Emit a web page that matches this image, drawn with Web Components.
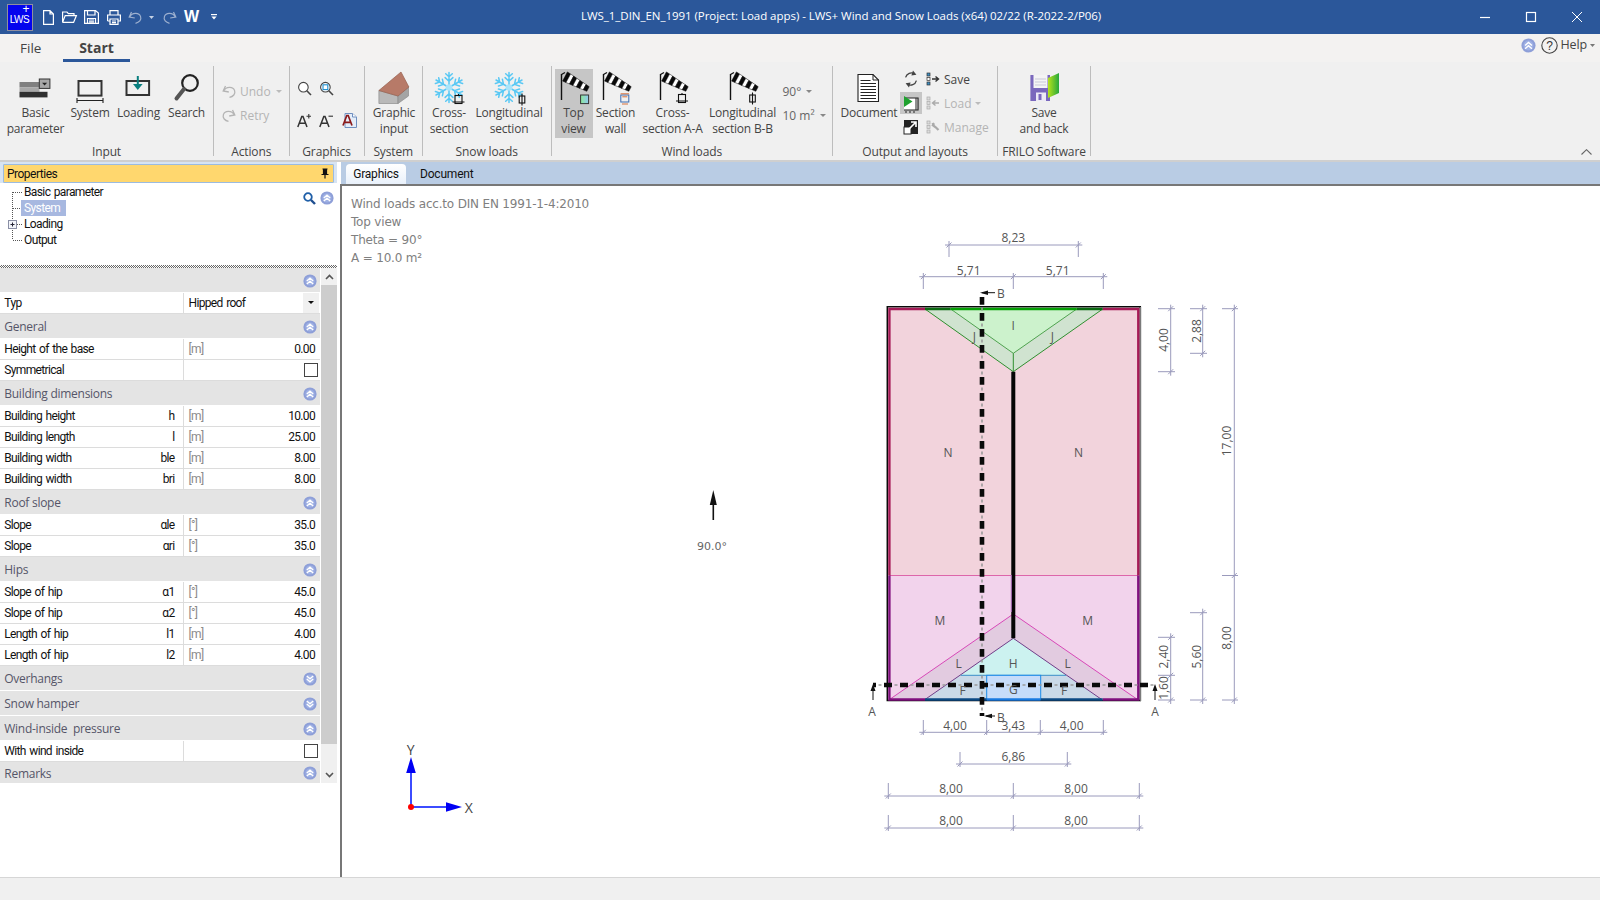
<!DOCTYPE html>
<html><head><meta charset="utf-8"><title>LWS+</title>
<style>
html,body{margin:0;padding:0;width:1600px;height:900px;overflow:hidden;background:#f0f0f0}
body{font-family:"Open Sans","Liberation Sans",sans-serif;font-size:12px;color:#333}
</style></head><body>
<app-shell>
  <app-titlebar slot="title">LWS_1_DIN_EN_1991 (Project: Load apps) - LWS+ Wind and Snow Loads (x64) 02/22 (R-2022-2/P06)</app-titlebar>
  <ribbon-tabs slot="tabs"></ribbon-tabs>
  <ribbon-bar slot="ribbon">
    <rb-group w="214" label="Input" pad="4">
      <rb-btn w="63"><ui-icon slot="icon" name="basic" w="63"></ui-icon>Basic<br>parameter</rb-btn>
      <rb-btn w="46"><ui-icon slot="icon" name="system" w="46"></ui-icon>System</rb-btn>
      <rb-btn w="51"><ui-icon slot="icon" name="loading" w="51"></ui-icon>Loading</rb-btn>
      <rb-btn w="45"><ui-icon slot="icon" name="search" w="45"></ui-icon>Search</rb-btn>
    </rb-group>
    <rb-group w="75.5" label="Actions" pad="8">
      <rb-col top="13" gap="0">
        <rb-small off caret><ui-icon slot="icon" name="undo" box="14" color="#b4b4b4"></ui-icon>Undo</rb-small>
        <rb-small off><ui-icon slot="icon" name="redo" box="14" color="#b4b4b4"></ui-icon>Retry</rb-small>
      </rb-col>
    </rb-group>
    <rb-group w="75" label="Graphics" pad="7"><rb-iconset>
      <ui-icon name="zoom" box="15"></ui-icon><ui-icon name="zoomfit" box="15"></ui-icon><span></span>
      <ui-icon name="aplus" box="15"></ui-icon><ui-icon name="aminus" box="15"></ui-icon><ui-icon name="adoc" box="15"></ui-icon>
    </rb-iconset></rb-group>
    <rb-group w="58.5" label="System" pad="2">
      <rb-btn w="55"><ui-icon slot="icon" name="house" w="55"></ui-icon>Graphic<br>input</rb-btn>
    </rb-group>
    <rb-group w="128.5" label="Snow loads" pad="6">
      <rb-btn w="40"><ui-icon slot="icon" name="snowcross" w="40"></ui-icon>Cross-<br>section</rb-btn>
      <rb-btn w="80"><ui-icon slot="icon" name="snowlong" w="80"></ui-icon>Longitudinal<br>section</rb-btn>
    </rb-group>
    <rb-group w="281.5" label="Wind loads" pad="3">
      <rb-btn w="38" active><ui-icon slot="icon" name="socktop" w="38"></ui-icon>Top<br>view</rb-btn>
      <rb-btn w="46"><ui-icon slot="icon" name="sockwall" w="46"></ui-icon>Section<br>wall</rb-btn>
      <rb-btn w="68"><ui-icon slot="icon" name="sockcross" w="68"></ui-icon>Cross-<br>section A-A</rb-btn>
      <rb-btn w="72"><ui-icon slot="icon" name="socklong" w="72"></ui-icon>Longitudinal<br>section B-B</rb-btn>
      <rb-col top="13" gap="0" left="0">
        <rb-small caret style="--c:#666">90°</rb-small>
        <rb-small caret style="--c:#666">10 m²</rb-small>
      </rb-col>
    </rb-group>
    <rb-group w="165" label="Output and layouts" pad="5">
      <rb-btn w="62"><ui-icon slot="icon" name="document" w="62"></ui-icon>Document</rb-btn>
      <rb-col top="1" gap="0" left="0">
        <rb-small wide><ui-icon slot="icon" name="refresh" box="22"></ui-icon><ui-icon slot="icon2" name="listin" box="14"></ui-icon>Save</rb-small>
        <rb-small wide off caret><ui-icon slot="icon" name="play" box="22" on></ui-icon><ui-icon slot="icon2" name="listout" box="14"></ui-icon>Load</rb-small>
        <rb-small wide off><ui-icon slot="icon" name="expand" box="22"></ui-icon><ui-icon slot="icon2" name="listtool" box="14"></ui-icon>Manage</rb-small>
      </rb-col>
    </rb-group>
    <rb-group w="93" label="FRILO Software" pad="12">
      <rb-btn w="68"><ui-icon slot="icon" name="saveback" w="68"></ui-icon>Save<br>and back</rb-btn>
    </rb-group>
  </ribbon-bar>
  <prop-panel slot="left">
    <tree-item first>Basic parameter</tree-item>
    <tree-item selected>System</tree-item>
    <tree-item plus>Loading</tree-item>
    <tree-item last>Output</tree-item>
    <prop-head slot="grid" blank></prop-head>
    <prop-row slot="grid" combo="Hipped roof">Typ</prop-row>
    <prop-head slot="grid">General</prop-head>
    <prop-row slot="grid" unit="[m]" value="0.00">Height of the base</prop-row>
    <prop-row slot="grid" check>Symmetrical</prop-row>
    <prop-head slot="grid">Building dimensions</prop-head>
    <prop-row slot="grid" sym="h" unit="[m]" value="10.00">Building height</prop-row>
    <prop-row slot="grid" sym="l" unit="[m]" value="25.00">Building length</prop-row>
    <prop-row slot="grid" sym="ble" unit="[m]" value="8.00">Building width</prop-row>
    <prop-row slot="grid" sym="bri" unit="[m]" value="8.00">Building width</prop-row>
    <prop-head slot="grid">Roof slope</prop-head>
    <prop-row slot="grid" sym="αle" unit="[°]" value="35.0">Slope</prop-row>
    <prop-row slot="grid" sym="αri" unit="[°]" value="35.0">Slope</prop-row>
    <prop-head slot="grid">Hips</prop-head>
    <prop-row slot="grid" sym="α1" unit="[°]" value="45.0">Slope of hip</prop-row>
    <prop-row slot="grid" sym="α2" unit="[°]" value="45.0">Slope of hip</prop-row>
    <prop-row slot="grid" sym="l1" unit="[m]" value="4.00">Length of hip</prop-row>
    <prop-row slot="grid" sym="l2" unit="[m]" value="4.00">Length of hip</prop-row>
    <prop-head slot="grid" down>Overhangs</prop-head>
    <prop-head slot="grid" down>Snow hamper</prop-head>
    <prop-head slot="grid">Wind-inside&nbsp; pressure</prop-head>
    <prop-row slot="grid" check>With wind inside</prop-row>
    <prop-head slot="grid" last>Remarks</prop-head>
  </prop-panel>
  <doc-area slot="right"></doc-area>
</app-shell>
<script>
const sock=(sub)=>{
  const s=[-9,76.5],e=[14,89],n=[0.47,-0.88];
  let o=`<path d="M-12.5 74V100" stroke="#111" stroke-width="1.4"/>`;
  o+=`<path d="M-12.5 74.5L-9 72.5" stroke="#111" stroke-width="1.2"/>`;
  const seg=7;
  for(let i=0;i<seg;i++){
    const a=i/seg,b=(i+1)/seg;
    const wa=5.2-2.6*a,wb=5.2-2.6*b;
    const pa=[s[0]+(e[0]-s[0])*a,s[1]+(e[1]-s[1])*a],pb=[s[0]+(e[0]-s[0])*b,s[1]+(e[1]-s[1])*b];
    const q=[[pa[0]+n[0]*wa,pa[1]+n[1]*wa],[pb[0]+n[0]*wb,pb[1]+n[1]*wb],[pb[0]-n[0]*wb,pb[1]-n[1]*wb],[pa[0]-n[0]*wa,pa[1]-n[1]*wa]];
    o+=`<polygon points="${q.map(p=>p.map(v=>v.toFixed(1)).join(',')).join(' ')}" fill="${i%2?'#fff':'#0a0a0a'}" stroke="#0a0a0a" stroke-width=".5"/>`;
  }
  return o+sub;
};
const flake=(cx,cy,r)=>{
  let o=`<g stroke="#58c8f4" stroke-width="1.5" fill="none" stroke-linecap="round">`;
  for(let i=0;i<6;i++){
    o+=`<g transform="translate(${cx} ${cy}) rotate(${i*60})"><path d="M0 0V${-r}M0 ${-r*.42}L${-r*.26} ${-r*.66}M0 ${-r*.42}L${r*.26} ${-r*.66}M0 ${-r*.72}L${-r*.22} ${-r*.92}M0 ${-r*.72}L${r*.22} ${-r*.92}"/></g>`;
  }
  return o+`<circle cx="${cx}" cy="${cy}" r="${r*.22}" fill="#a8e4fa" stroke="none"/></g>`;
};
const markC=(x,y)=>`<g stroke="#111" fill="none" stroke-width="1.1"><rect x="${x-3.5}" y="${y-4}" width="7" height="8"/><path d="M${x-6} ${y+2.5}H${x+6}M${x} ${y-5.5}V${y-3.5}"/></g>`;
const markL=(x,y)=>`<g stroke="#111" fill="none" stroke-width="1.1"><rect x="${x-2.8}" y="${y-3.5}" width="5.6" height="7"/><path d="M${x} ${y-6}V${y+6}"/></g>`;
const ICONS={
 basic:`<rect x="-16" y="82" width="20" height="5.4" fill="#808080"/><rect x="-16" y="87.4" width="20" height="4.4" fill="#a8a8a8"/><rect x="-16" y="91.8" width="28" height="5.6" fill="#303030"/><rect x="3.8" y="79" width="10.6" height="9.4" fill="#a8a8a8" stroke="#333"/><path d="M6.6 82.8h5l-2.5 2.6z" fill="#222"/>`,
 system:`<rect x="-11.5" y="81" width="23" height="14.6" fill="none" stroke="#333" stroke-width="2"/><path d="M-13 100.5H13M-13 98V103M13 98V103" stroke="#222" stroke-width="1.1" fill="none"/>`,
 loading:`<rect x="-12" y="81" width="22.6" height="14" fill="none" stroke="#333" stroke-width="2"/><path d="M-.7 76V85" stroke="#0a7f7f" stroke-width="2"/><path d="M-5.5 84H4.1L-.7 90z" fill="#0a7f7f"/>`,
 search:`<circle cx="3.5" cy="83" r="7.8" fill="none" stroke="#222" stroke-width="2.2"/><path d="M-2.5 89L-10 98.5" stroke="#555" stroke-width="4" stroke-linecap="round"/>`,
 undo:`<path d="M3.5 2L1.2 7L6.8 8" fill="none" stroke="currentColor" stroke-width="1.3"/><path d="M1.8 6.8C4 2.5 11 2 12.6 6.6C13.8 10 11 12.6 7.5 13.4" fill="none" stroke="currentColor" stroke-width="1.3"/>`,
 redo:`<path d="M10.5 2L12.8 7L7.2 8" fill="none" stroke="currentColor" stroke-width="1.3"/><path d="M12.2 6.8C10 2.5 3 2 1.4 6.6C.2 10 3 12.6 6.5 13.4" fill="none" stroke="currentColor" stroke-width="1.3"/>`,
 zoom:`<circle cx="6.4" cy="6.2" r="4.8" fill="#fff" stroke="#444" stroke-width="1.1"/><path d="M9.8 9.8L14 14" stroke="#444" stroke-width="1.6"/>`,
 zoomfit:`<circle cx="6.4" cy="6.2" r="4.8" fill="#fff" stroke="#444" stroke-width="1.1"/><rect x="4" y="3.8" width="4.8" height="4.8" fill="none" stroke="#1d8fd0" stroke-width="1.1"/><path d="M9.8 9.8L14 14" stroke="#444" stroke-width="1.6"/>`,
 aplus:`<path d="M.8 14L4.8 3.4H6L10 14M2.4 10.2H8.4" fill="none" stroke="#333" stroke-width="1.5"/><path d="M9.5 3.2H14M11.8 1V5.5" stroke="#333" stroke-width="1.1"/>`,
 aminus:`<path d="M.8 14L4.8 3.4H6L10 14M2.4 10.2H8.4" fill="none" stroke="#333" stroke-width="1.5"/><path d="M9.5 3.2H14" stroke="#333" stroke-width="1.1"/>`,
 adoc:`<path d="M3 .5H10.5L14.5 4V14.5H3z" fill="#e4edf9" stroke="#6f8fc0"/><path d="M10.5 .5V4H14.5" fill="#fff" stroke="#6f8fc0"/><path d="M1 12.5L4.8 2.5H6.2L10 12.5M2.4 9.3H8.6" fill="none" stroke="#8b1a1a" stroke-width="1.7"/>`,
 house:`<polygon points="-15.6,90.5 -15.6,103.5 3.5,103.5 3.5,96" fill="#b9b9b9" stroke="#8d8d8d" stroke-width=".7"/><polygon points="3.5,96 3.5,103.5 14,96 14,87" fill="#a4a4a4" stroke="#8d8d8d" stroke-width=".7"/><polygon points="-15.6,90.5 6.5,72 14.4,87 3.5,96" fill="#b77a68" stroke="#96604f" stroke-width=".7"/>`,
 snowcross:flake(0,87.5,15)+markC(9.5,99.5),
 snowlong:flake(0,87.5,15)+markL(13,99.5),
 socktop:sock(`<defs><linearGradient id="g"><stop offset="0" stop-color="#8de89a"/><stop offset="1" stop-color="#8fc8f0"/></linearGradient></defs><rect x="6.6" y="95" width="8" height="8.6" fill="url(#g)" stroke="#333"/>`),
 sockwall:sock(`<rect x="4.8" y="95" width="8" height="7" fill="none" stroke="#3a6ab0"/><path d="M6.3 96.8h5M4.6 93.8h8.4" stroke="#d8703a" stroke-width="1"/><path d="M6 104h6" stroke="#d8703a"/>`),
 sockcross:sock(markC(9,98.5)),
 socklong:sock(markL(9.5,98.5)),
 document:`<path d="M-11 74.5H4L9.5 80V101.5H-11z" fill="#fff" stroke="#222" stroke-width="1.1"/><path d="M4 74.5V80H9.5" fill="none" stroke="#222" stroke-width="1"/><path d="M-8.5 80.5H1.5M-8.5 83.5H7M-8.5 86.5H7M-8.5 89.5H7M-8.5 92.5H7M-8.5 95.5H7M-8.5 98.5H7" stroke="#222" stroke-width="1"/>`,
 refresh:`<g fill="none" stroke="#444" stroke-width="1.3"><path d="M5.6 9.4A6 6 0 0 1 14.6 5.8"/><path d="M16.4 12.6A6 6 0 0 1 7.4 16.2"/></g><path d="M13 2.5L16.4 6.8L11.4 7.5z" fill="#444"/><path d="M9 19.5L5.6 15.2L10.6 14.5z" fill="#444"/>`,
 play:`<path d="M4 6H18V18H4" fill="#fff" stroke="#222" stroke-width="1.2"/><path d="M4 4L12.5 9.5L4 15z" fill="#1fa12f"/><path d="M5 20h2M9 20h2M13 20h2M16 6v12" stroke="#222"/>`,
 expand:`<rect x="4" y="4" width="14" height="14" fill="#222"/><rect x="4" y="11" width="7" height="7" fill="#fff" stroke="#222"/><path d="M9.5 12.5L15.5 6.5M11 6H16V11" fill="none" stroke="#fff" stroke-width="1.6"/>`,
 listin:`<g fill="#3c8fc4" stroke="#333" stroke-width=".7"><rect x="1" y="1" width="3" height="3"/><rect x="1" y="5.5" width="3" height="3" fill="#fff"/><rect x="1" y="10" width="3" height="3"/></g><path d="M6 7H12M9.5 4.5L12.5 7L9.5 9.5" fill="none" stroke="#333" stroke-width="1.4"/>`,
 listout:`<g fill="#ddd" stroke="#aaa" stroke-width=".7"><rect x="1" y="1" width="3" height="3"/><rect x="1" y="5.5" width="3" height="3"/><rect x="1" y="10" width="3" height="3"/></g><path d="M7 7H13M9.5 4.5L6.5 7L9.5 9.5" fill="none" stroke="#aaa" stroke-width="1.4"/>`,
 listtool:`<g fill="#ddd" stroke="#aaa" stroke-width=".7"><rect x="1" y="1" width="3" height="3"/><rect x="1" y="5.5" width="3" height="3"/><rect x="1" y="10" width="3" height="3"/></g><path d="M6 4.5L10 7.5L12.5 10" fill="none" stroke="#aaa" stroke-width="2.2"/><path d="M5.5 3.5L7.5 2.5L9 4L7.5 6z" fill="#aaa"/>`,
 saveback:`<path d="M-13.6 75H6V101H-13.6z" fill="#7a68bd"/><rect x="-10.5" y="75" width="14" height="13" fill="#f4f4f4"/><path d="M-9 79H2M-9 82H2M-9 85H2" stroke="#c9c9d8"/><rect x="-8" y="92.5" width="10" height="8.5" fill="#ece9f6"/><rect x="-5.5" y="94" width="3" height="6" fill="#7a68bd"/><defs><linearGradient id="d" x1="0" x2="1"><stop offset="0" stop-color="#b6e31c"/><stop offset="1" stop-color="#27a83c"/></linearGradient></defs><polygon points="4,78 15,73 15,93 4,98" fill="url(#d)"/>`,
 chev2:`<circle cx="7" cy="7" r="6.6" fill="#8e9fd8"/><circle cx="7" cy="7" r="4.6" fill="#9fb1e4"/><path d="M3.8 7L7 4.2L10.2 7M3.8 10L7 7.2L10.2 10" fill="none" stroke="#fff" stroke-width="1.4"/>`,
 chev2d:`<circle cx="7" cy="7" r="6.6" fill="#8e9fd8"/><circle cx="7" cy="7" r="4.6" fill="#9fb1e4"/><path d="M3.8 4L7 6.8L10.2 4M3.8 7L7 9.8L10.2 7" fill="none" stroke="#fff" stroke-width="1.4"/>`
};
const VB={undo:14,redo:14,listin:14,listout:14,listtool:14,refresh:22,play:22,expand:22,chev2:14,chev2d:14};
function def(name,css,html,init){
  customElements.define(name,class extends HTMLElement{
    connectedCallback(){
      if(this.shadowRoot)return;
      const r=this.attachShadow({mode:'open'});
      const h=typeof html==='function'?html(this):html;
      r.innerHTML=`<style>${typeof css==='function'?css(this):css}</style>${h}`;
      if(init)init(this,r);
    }
  });
}
def('ui-icon',el=>`:host{display:block;line-height:0;color:#333;${el.hasAttribute('on')?'background:#c6c6c6;':''}}svg{display:block;overflow:visible}`,el=>{
  const n=el.getAttribute('name'),w=el.getAttribute('w'),b=el.getAttribute('box'),c=el.getAttribute('color');
  const body=ICONS[n];
  if(b){const v=VB[n]||15;return `<svg width="${b}" height="${b}" viewBox="0 0 ${v} ${v}" style="color:${c||'#333'}">${body}</svg>`;}
  return `<svg width="${w}" height="35" viewBox="${-w/2} 69 ${w} 35">${body}</svg>`;
});
def('app-shell',`:host{display:grid;width:1600px;height:900px;grid-template-rows:34px 28px 98px 2px 715px 1px 22px;background:#f0f0f0}
 .sep{background:#cfcfcf}.sep2{background:#d6d6d6}
 .main{display:flex;min-height:0}`,
 `<slot name="title"></slot><slot name="tabs"></slot><slot name="ribbon"></slot><div class="sep"></div>
  <div class="main"><slot name="left"></slot><slot name="right"></slot></div><div class="sep2"></div><status-bar></status-bar>`);
def('status-bar',`:host{display:block;background:#f0f0f0}`,``);
def('app-titlebar',`:host{display:flex;align-items:center;background:#2b579a;color:#fff;height:34px;font:11.5px "Open Sans",sans-serif}
 .left{flex:0 0 581px;display:flex;align-items:center;height:34px;position:relative}
 .logo{margin-left:6.5px;width:24px;height:25px;background:#0404ee;border:1px solid #8f8f9f;position:relative;color:#fff;font:10px/1 "Liberation Sans",sans-serif;text-align:center}
 .logo b{position:absolute;left:0;right:0;bottom:5px;font-weight:400;font-size:10px;letter-spacing:-.5px}
 .logo i{position:absolute;right:2px;top:-2px;font-style:normal;font-size:12px}
 svg{display:block;overflow:visible;fill:none;stroke:#fff;stroke-width:1.2}
 .w{font:bold 16px "Liberation Sans",sans-serif;margin-left:7.5px;letter-spacing:-.5px;width:14px}
 .title{flex:1;white-space:nowrap;letter-spacing:-.04px;padding-bottom:4px}
 .win{display:flex;align-items:center;margin-right:18px}`,
 `<div class="left"><div class="logo"><i>+</i><b>LWS</b></div>
 <svg style="margin-left:10px" width="11" height="15" viewBox="0 0 11 15"><path d="M.6.6H7L10.4 4V14.4H.6zM7 .6V4H10.4"/></svg>
 <svg style="margin-left:8px" width="15" height="12" viewBox="0 0 15 12"><path d="M.6 11.4V1H5L6.4 2.6H12V4.6M.6 11.4H11.6L14.4 4.6H3.2L.6 11.4"/></svg>
 <svg style="margin-left:7px" width="15" height="14" viewBox="0 0 15 14"><path d="M.6.6H11.5L14.4 3V13.4H.6zM3.5.6V5H11V.6M3.5 13.4V8.5H11.5V13.4M5 10H10M5 11.8H10"/></svg>
 <svg style="margin-left:8px" width="14" height="15" viewBox="0 0 14 15"><path d="M3 5V.6H11V5M.6 11V5H13.4V11H11M3 11H.6M3 9H11V14.4H3zM5 11H9M5 12.6H9"/></svg>
 <svg style="margin-left:7px;stroke:#9db0cf" width="14" height="14" viewBox="0 0 14 14"><path d="M3.5 2L1.2 7L6.8 8M1.8 6.8C4 2.5 11 2 12.6 6.6C13.8 10 11 12.6 7.5 13.4"/></svg>
 <svg style="margin-left:7px;fill:#c5d2e5;stroke:none" width="5" height="3" viewBox="0 0 5 3"><path d="M0 0H5L2.5 3z"/></svg>
 <svg style="margin-left:9px;stroke:#9db0cf" width="14" height="14" viewBox="0 0 14 14"><path d="M10.5 2L12.8 7L7.2 8M12.2 6.8C10 2.5 3 2 1.4 6.6C.2 10 3 12.6 6.5 13.4"/></svg>
 <span class="w">W</span>
 <svg style="margin-left:13px;stroke:#fff" width="6" height="6" viewBox="0 0 6 6"><path d="M0 .6H6"/><path d="M.4 2.6H5.6L3 5.6z" fill="#fff" stroke="none"/></svg>
 </div><div class="title"><slot></slot></div>
 <div class="win">
 <svg width="10" height="10" viewBox="0 0 10 10" style="margin-right:36px"><path d="M0 5.5H10"/></svg>
 <svg width="10" height="10" viewBox="0 0 10 10" style="margin-right:36px"><rect x=".5" y=".5" width="9" height="9"/></svg>
 <svg width="10" height="10" viewBox="0 0 10 10"><path d="M0 0L10 10M10 0L0 10" stroke-width="1"/></svg>
 </div>`);
def('ribbon-tabs',`:host{display:flex;height:28px;background:#f3f2f1;color:#444;font:13.5px/28px "Open Sans",sans-serif;box-sizing:border-box;position:relative}
 .f{padding-left:20px;width:63px;box-sizing:border-box;line-height:28px}
 .s{width:67px;box-sizing:border-box;text-align:center;font-weight:700;font-size:14px;border-bottom:3px solid #2b579a;height:28px;line-height:28px;color:#444}
 .r{margin-left:auto;display:flex;align-items:center;height:22px;color:#444;font-size:12.5px;padding-right:5px}
 svg{display:block}`,
 `<div class="f">File</div><div class="s">Start</div>
 <div class="r"><ui-icon name="chev2" box="15"></ui-icon>
 <svg style="margin-left:5px" width="17" height="17" viewBox="0 0 17 17"><circle cx="8.5" cy="8.5" r="7.7" fill="none" stroke="#444" stroke-width="1.1"/><text x="8.5" y="12.8" text-anchor="middle" font-family="Liberation Sans" font-size="12" fill="#333">?</text></svg>
 <span style="margin-left:3px;letter-spacing:-.15px">Help</span>
 <svg style="margin-left:3px" width="5" height="3" viewBox="0 0 5 3"><path d="M0 0H5L2.5 3z" fill="#777"/></svg></div>`);
def('ribbon-bar',`:host{display:flex;height:98px;background:#f0f0f0;position:relative;align-items:flex-start}
 svg{position:absolute;right:8px;bottom:5px}`,
 `<slot></slot><svg width="11" height="6" viewBox="0 0 11 6"><path d="M.5 5.5L5.5.7L10.5 5.5" fill="none" stroke="#666" stroke-width="1.1"/></svg>`);
def('rb-group',el=>`:host{display:flex;flex-direction:column;box-sizing:border-box;flex:none;width:${el.getAttribute('w')}px;height:90px;margin-top:4px;border-right:1px solid #bdbdbd}
 .c{height:78px;display:flex;padding-left:${el.getAttribute('pad')||0}px;box-sizing:border-box}
 .l{height:16px;text-align:center;white-space:nowrap;color:#444;font:12px/16px "Open Sans",sans-serif;letter-spacing:-.13px;margin-bottom:-4px}`,
 el=>`<div class="c"><slot></slot></div><div class="l">${el.getAttribute('label')}</div>`);
def('rb-btn',el=>`:host{display:block;flex:none;width:${el.getAttribute('w')}px;padding-top:3px;box-sizing:border-box;height:72px}
 .in{height:69px;${el.hasAttribute('active')?'background:#c6c6c6;':''}}
 .l{text-align:center;font:12px/16px "Open Sans",sans-serif;letter-spacing:-.2px;color:#444;white-space:nowrap;margin-top:1px}`,
 `<div class="in"><slot name="icon"></slot><div class="l"><slot></slot></div></div>`);
def('rb-col',el=>`:host{display:flex;flex-direction:column;padding-top:${el.getAttribute('top')}px;margin-left:${el.getAttribute('left')||0}px}`,`<slot></slot>`);
def('rb-small',el=>`:host{display:flex;align-items:center;height:24px;font:12px "Open Sans",sans-serif;letter-spacing:0;white-space:nowrap;color:${el.hasAttribute('off')?'#b4b4b4':'var(--c,#444)'}}
 .t{margin-left:4px}
 .car{display:inline-block;border:3px solid transparent;border-top:3px solid #888;border-bottom:0;margin-left:${el.hasAttribute('wide')?3:5}px;${el.hasAttribute('off')?'border-top-color:#bbb;':''}}
 ::slotted([slot=icon2]){margin-left:4px}`,
 el=>`<slot name="icon"></slot><slot name="icon2"></slot><span class="t"><slot></slot></span>${el.hasAttribute('caret')?'<span class="car"></span>':''}`);
def('rb-iconset',`:host{display:grid;grid-template-columns:22.5px 22.5px 22px;grid-template-rows:14px 14px;row-gap:18px;padding-top:15px}`,`<slot></slot>`);
def('prop-panel',`:host{display:flex;flex-direction:column;width:341px;height:715px;background:#fff;box-sizing:border-box;flex:none;position:relative}
 .hdwrap{background:#d7e4f3;padding:2px 3px 0;height:21px;box-sizing:border-box;width:337px}
 .hd{height:19px;background:#ffd76e;border:1px solid #9bbbe0;box-sizing:border-box;display:flex;align-items:center;justify-content:space-between;padding:0 4px 0 3px;font:12px "Roboto",sans-serif;letter-spacing:-.5px;color:#111;border-radius:1px}
 .tree{height:82px;padding-top:1px;box-sizing:border-box;position:relative;width:337px}
 .tools{position:absolute;right:3px;top:8px;display:flex;align-items:center;gap:4px}
 .sash{height:3px;width:337px;background:repeating-conic-gradient(#666 0 25%,#fff 0 50%) 0 0/2px 2px}
 .grid{display:flex;width:337px;height:515px}
 .rows{width:320px}
 .sb{width:16px;margin-left:1px;background:#f0f0f0;display:flex;flex-direction:column}
 .sb svg{display:block}
 .thumb{height:459px;background:#cdcdcd;flex:none}
 .sb .b{height:17px;display:flex;align-items:center;justify-content:center;flex:none}
 .sb .fill{flex:1}`,
 `<div class="hdwrap"><div class="hd">Properties<svg width="8" height="11" viewBox="0 0 8 11"><path d="M1.5 1H6.5M2.5 1V6M5.5 1V6M.5 6.5H7.5M4 6.5V10.5" stroke="#111" stroke-width="1.2" fill="none"/><rect x="2.5" y="1" width="2.5" height="5.5" fill="#111"/></svg></div></div>
 <div class="tree"><slot></slot><div class="tools"><svg width="13" height="13" viewBox="0 0 13 13"><circle cx="5" cy="5" r="3.8" fill="#fff" stroke="#1f5fa8" stroke-width="1.8"/><path d="M8 8L12 12" stroke="#1f4f90" stroke-width="2.4"/></svg><ui-icon name="chev2" box="14"></ui-icon></div></div>
 <div class="sash"></div>
 <div class="grid"><div class="rows"><slot name="grid"></slot></div>
 <div class="sb"><div class="b"><svg width="9" height="6" viewBox="0 0 9 6"><path d="M1 5L4.5 1.5L8 5" fill="none" stroke="#555" stroke-width="1.6"/></svg></div><div class="thumb"></div><div class="fill"></div><div class="b"><svg width="9" height="6" viewBox="0 0 9 6"><path d="M1 1L4.5 4.5L8 1" fill="none" stroke="#555" stroke-width="1.6"/></svg></div></div></div>`);
def('tree-item',el=>`:host{display:flex;height:16px;align-items:center;font:12px "Roboto",sans-serif;letter-spacing:-.62px;word-spacing:1px;color:#111;white-space:nowrap}
 svg{flex:none;display:block}
 .t{${el.hasAttribute('selected')?'background:#a7b8e0;color:#fff;padding:0 6px 0 3px;':'padding:0 3px;'}margin-left:-3px;line-height:16px;height:16px}`,
 el=>{
  const first=el.hasAttribute('first'),last=el.hasAttribute('last'),plus=el.hasAttribute('plus');
  return `<svg width="24" height="16" viewBox="0 0 24 16"><path d="M12.5 ${first?8:0}V${last?8:16}" stroke="#555" stroke-dasharray="1 1" fill="none"/><path d="M13 8.5H22" stroke="#555" stroke-dasharray="1 1" fill="none"/>${plus?'<rect x="8.5" y="4.5" width="8" height="8" fill="#f2f4fa" stroke="#8a8fa5"/><path d="M10.5 8.5H14.5M12.5 6.5V10.5" stroke="#223"/>':''}</svg><span class="t"><slot></slot></span>`;
 });
def('prop-head',el=>`:host{display:flex;align-items:center;justify-content:space-between;height:${el.hasAttribute('last')?21:el.hasAttribute('blank')?24.5:25}px;box-sizing:border-box;background:#e4e4e4;${el.hasAttribute('last')?'':'border-bottom:1px solid #fff;'}padding:2px 3px 0 4.3px;font:12px "Open Sans",sans-serif;letter-spacing:-.27px;color:#555568;white-space:nowrap}`,
 el=>`<span><slot></slot></span><ui-icon name="${el.hasAttribute('down')?'chev2d':'chev2'}" box="14"></ui-icon>`);
def('prop-row',el=>`:host{display:grid;grid-template-columns:182.5px 1.5px 1fr;height:21px;box-sizing:border-box;border-bottom:1px solid #dcdcdc;background:#fff;font:12px "Roboto",sans-serif;letter-spacing:-.66px;word-spacing:1.2px;color:#111;white-space:nowrap;line-height:21px}
 .a{display:flex;justify-content:space-between;padding:0 8px 0 4.3px}
 .d{background:#dcdcdc}
 .b{display:flex;justify-content:space-between;padding:0 5px 0 4.5px}
 .u{color:#8a8a8a}
 .ck{width:12px;height:12px;border:1px solid #444;background:#fff;margin:3.5px -2.5px 0 0;flex:none}
 .dd{width:16px;height:20px;background:#f0f0f0;margin-right:-4px;display:flex;align-items:center;justify-content:center}
 .dd i{border:3px solid transparent;border-top:3.5px solid #111;border-bottom:0}`,
 el=>{
  const g=n=>el.getAttribute(n);
  let b='';
  if(g('combo')!==null) b=`<span>${g('combo')}</span><span class="dd"><i></i></span>`;
  else if(el.hasAttribute('check')) b=`<span></span><span class="ck"></span>`;
  else b=`<span class="u">${g('unit')}</span><span>${g('value')}</span>`;
  return `<div class="a"><span><slot></slot></span><span>${g('sym')||''}</span></div><div class="d"></div><div class="b">${b}</div>`;
 });
def('doc-area',`:host{display:flex;flex-direction:column;flex:none;width:1259px;height:715px}
 .tabs{height:22px;background:#b9cce4;display:flex;align-items:flex-end;padding-left:5px;font:12px "Roboto",sans-serif;letter-spacing:-.2px;color:#111;flex:none}
 .t{height:20px;line-height:20px;width:60px;box-sizing:border-box;text-align:center;border-radius:4px 4px 0 0;background:linear-gradient(#fff,#e9f1fb)}
 .t2{height:20px;line-height:20px;margin-left:14px}
 canvas-view{flex:1;min-height:0}`,
 `<div class="tabs"><div class="t">Graphics</div><div class="t2">Document</div></div><canvas-view></canvas-view>`);
const hdim=(y,xs,e1,e2,labs,ty)=>{
  let o=`<path d="M${xs[0]-4} ${y}H${xs[xs.length-1]+4}"/>`;
  xs.forEach(x=>o+=`<path d="M${x} ${e1}V${e2}M${x-2.5} ${y+2.5}L${x+2.5} ${y-2.5}"/>`);
  labs.forEach(([t,x])=>o+=`<text x="${x}" y="${ty+4.5}" stroke="none">${t}</text>`);
  return o;
};
const vdim=(x,ys,x1,x2,labs,tx)=>{
  let o=`<path d="M${x} ${ys[0]-4}V${ys[ys.length-1]+4}"/>`;
  ys.forEach(y=>o+=`<path d="M${x1} ${y}H${x2}M${x-2.5} ${y+2.5}L${x+2.5} ${y-2.5}"/>`);
  labs.forEach(([t,y])=>o+=`<text transform="translate(${tx+4.5} ${y}) rotate(-90)" stroke="none">${t}</text>`);
  return o;
};
const cx=1013.3;
const dims=`<g stroke="#9a9abc" stroke-width="1" fill="none" font-family="Open Sans" font-size="12" text-anchor="middle">
 <g fill="#555">
 ${hdim(245,[949,1078.3],241,257,[['8,23',cx]],237)}
 ${hdim(276.7,[923.3,cx,1103.3],273,289,[['5,71',968.7],['5,71',1057.7]],270)}
 ${vdim(1170.7,[308.7,371.7],1158,1175,[['4,00',340]],1163.5)}
 ${vdim(1202.7,[308.7,353.3],1190,1207,[['2,88',331]],1196.2)}
 ${vdim(1234.3,[308.7,575.5,700],1222,1238,[['17,00',441],['8,00',638]],1226.6)}
 ${vdim(1202.7,[612.7,700],1190,1207,[['5,60',656.7]],1196.2)}
 ${vdim(1170.7,[637.3,675.3,700],1158,1175,[['2,40',656.7],['1,60',688]],1163.5)}
 ${hdim(732.3,[923.3,986.7,1040.3,1103.3],720,735,[['4,00',955],['3,43',cx],['4,00',1071.7]],725.7)}
 ${hdim(764,[960,1067.3],752,767,[['6,86',cx]],756.7)}
 ${hdim(796,[888.3,cx,1139.3],783,799,[['8,00',951],['8,00',1076]],788.7)}
 ${hdim(828,[888.3,cx,1139.3],815,831,[['8,00',951],['8,00',1076]],820.7)}
 </g></g>`;
const zl=(t,x,y)=>`<text x="${x}" y="${y+4.5}" text-anchor="middle">${t}</text>`;
const drawing=`<svg width="1258" height="691" viewBox="342 186 1258 691" style="display:block">
 <rect x="889" y="309" width="249.5" height="266.5" fill="#f2d3dc"/>
 <rect x="889" y="575.5" width="249.5" height="124" fill="#f2d3ec"/>
 <path d="M889 575.5H1138.5" stroke="#dd66aa" fill="none"/>
 <polygon points="889.5,699.5 ${cx},614 1137.5,699.5" fill="#e2cbe0"/>
 <path d="M889.5 699.5L${cx} 614L1137.5 699.5" fill="none" stroke="#d848b8" stroke-width="1"/>
 <polygon points="925,699.5 960.7,675.3 1066,675.3 1101.7,699.5" fill="#c9d9e8"/>
 <polygon points="${cx},638.3 960.7,675.3 1066,675.3" fill="#ccf2f0"/>
 <path d="M925 699.5L${cx} 638.3L1101.7 699.5" fill="none" stroke="#70408a" stroke-width="1"/>
 <path d="M960.7 675.3H1066" stroke="#3a90c8" fill="none"/>
 <rect x="986.7" y="675.3" width="54" height="24.2" fill="#c6dcfa" stroke="#1a8ae8" stroke-width="1"/>
 <polygon points="925,309 1102.7,309 ${cx},371.7" fill="#d0e3d0"/>
 <polygon points="950.7,309 1076.7,309 ${cx},353.3" fill="#ccf2cc" stroke="#2f8f2f" stroke-width=".8"/>
 <path d="M925 309L${cx} 371.7L1102.7 309M${cx} 353.3V371.7" fill="none" stroke="#2f8f2f" stroke-width="1"/>
 <path d="M887.3 700.5V306.7H1140.3V700.5Z" fill="none" stroke="#0a0a0a" stroke-width="1.5"/>
 <path d="M1140.9 307V701" stroke="#c4c4c4" stroke-width="1" fill="none"/>
 <path d="M889.4 575.5V309H925M1102.7 309H1138.3V575.5" fill="none" stroke="#a51a56" stroke-width="2.4"/>
 <path d="M925 309H950.7M1076.7 309H1102.7" stroke="#0a6a10" stroke-width="2.4" fill="none"/>
 <path d="M950.7 309H1076.7" stroke="#04a004" stroke-width="2.4" fill="none"/>
 <path d="M889.4 575.5V699.5H925M1102.7 699.5H1138.3V575.5" fill="none" stroke="#80107e" stroke-width="2.4"/>
 <path d="M925 699.5H986.7M1040.7 699.5H1102.7" stroke="#0c4a84" stroke-width="2.4" fill="none"/>
 <path d="M986.7 699.5H1040.7" stroke="#1a7ae0" stroke-width="2.4" fill="none"/>
 <path d="M${cx} 371.7V638.3" stroke="#050505" stroke-width="4" fill="none"/>
 <path d="M${cx-2} 575V612" stroke="#b070c0" stroke-width="1" fill="none"/>
 <path d="M873 685H1154" stroke="#9a9a9a" stroke-width="1.6" stroke-dasharray="3 13" stroke-dashoffset="10.5" fill="none"/>
 <path d="M873 685H1150" stroke="#0a0a0a" stroke-width="4.6" stroke-dasharray="8 8" stroke-dashoffset="5" fill="none"/>
 <path d="M982 297V718" stroke="#9a9a9a" stroke-width="1.6" stroke-dasharray="3 13" stroke-dashoffset="5.5" fill="none"/>
 <path d="M982 297V716" stroke="#0a0a0a" stroke-width="4.6" stroke-dasharray="7.7 8.3" fill="none"/>
 ${dims}
 <g fill="#555" font-family="Open Sans" font-size="12">
  ${zl('I',cx,325)}${zl('J',974.3,336)}${zl('J',1052.3,336)}${zl('N',948,452)}${zl('N',1078.6,452)}
  ${zl('M',940,620.7)}${zl('M',1087.7,620.7)}${zl('L',958.7,663.3)}${zl('L',1067.7,663.3)}${zl('H',cx,663.3)}
  ${zl('F',962.7,690.7)}${zl('F',1064,690.7)}${zl('G',cx,689)}
  ${zl('A',872,711)}${zl('A',1155,711)}${zl('B',1001,293)}${zl('B',1001,717)}
 </g>
 <g stroke="#111" stroke-width="1" fill="#111">
  <path d="M873 700V689M1155 700V689"/><path d="M873 684L870.5 691H875.5zM1155 684L1152.5 691H1157.5z" stroke="none"/>
  <path d="M982 292.7H995"/><path d="M980 292.7L988 290.5V295z" stroke="none"/>
  <path d="M986 716H995"/><path d="M984 716L992 713.8V718.2z" stroke="none"/>
  <path d="M713.3 497V520" stroke-width="1.6"/><path d="M713.3 490L709.8 505H716.8z" stroke="none"/>
 </g>
 <text x="712" y="550" text-anchor="middle" fill="#666" font-family="DejaVu Sans" font-size="11">90.0°</text>
 <path d="M411 807V770M411 807H450" stroke="#3c4cff" stroke-width="2" fill="none"/>
 <path d="M411 757L406.2 773H415.8zM462 807L446 802.3V811.7z" fill="#0000f4"/>
 <circle cx="411" cy="807" r="3" fill="#f00"/>
 <text x="410.7" y="755" text-anchor="middle" fill="#444" font-family="Open Sans" font-size="14">Y</text>
 <text x="468.7" y="812.5" text-anchor="middle" fill="#444" font-family="Open Sans" font-size="14">X</text>
</svg>`;
def('canvas-view',`:host{display:block;position:relative;background:#fff;border-top:2px solid #777;border-left:2px solid #777;box-sizing:border-box;margin-left:-1px;overflow:hidden}
 .info{position:absolute;left:9px;top:9px;font:12px/18px "DejaVu Sans",sans-serif;color:#808080;letter-spacing:-.18px;white-space:nowrap}
 svg{display:block}`,
 `<div class="info">Wind loads acc.to DIN EN 1991-1-4:2010<br>Top view<br>Theta = 90°<br>A = 10.0 m²</div>${drawing}`);
</script>
</body></html>
